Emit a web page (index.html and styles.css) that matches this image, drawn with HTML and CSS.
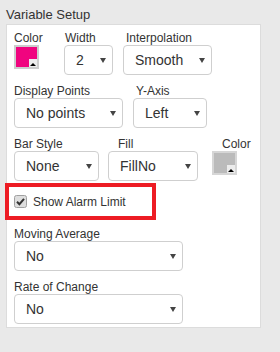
FILE: index.html
```html
<!DOCTYPE html>
<html>
<head>
<meta charset="utf-8">
<link rel="stylesheet" href="styles.css">
</head>
<body>
<div class="title">Variable Setup</div>
<div class="panel">
  <div class="row">
    <div class="field f-color">
      <div class="lbl">Color</div>
      <div class="swatch pink"><span class="corner"><span class="tri"></span></span></div>
    </div>
    <div class="field f-width">
      <div class="lbl pl1">Width</div>
      <div class="sel s-width">2<i class="arrow"></i></div>
    </div>
    <div class="field">
      <div class="lbl pl3">Interpolation</div>
      <div class="sel s-interp">Smooth<i class="arrow"></i></div>
    </div>
  </div>
  <div class="row">
    <div class="field f-disp">
      <div class="lbl">Display Points</div>
      <div class="sel s-disp">No points<i class="arrow"></i></div>
    </div>
    <div class="field">
      <div class="lbl pl3">Y-Axis</div>
      <div class="sel s-yaxis">Left<i class="arrow"></i></div>
    </div>
  </div>
  <div class="row">
    <div class="field f-bar">
      <div class="lbl">Bar Style</div>
      <div class="sel s-bar">None<i class="arrow"></i></div>
    </div>
    <div class="field f-fill">
      <div class="lbl pl10">Fill</div>
      <div class="sel s-fill">FillNo<i class="arrow"></i></div>
    </div>
    <div class="field">
      <div class="lbl pl10">Color</div>
      <div class="swatch grey"><span class="corner"><span class="tri"></span></span></div>
    </div>
  </div>
  <div class="alarm">
    <svg class="check" width="13" height="13" viewBox="0 0 13 13">
      <rect x="0.5" y="0.5" width="12" height="12" rx="2" fill="#dedede" stroke="#a0a0a0"/>
      <path d="M3 6.8 L5.4 9.2 L10 3.8" fill="none" stroke="#333" stroke-width="2"/>
    </svg>
    <span class="alarm-text">Show Alarm Limit</span>
  </div>
  <div class="field block">
    <div class="lbl">Moving Average</div>
    <div class="sel s-wide">No<i class="arrow"></i></div>
  </div>
  <div class="field block">
    <div class="lbl">Rate of Change</div>
    <div class="sel s-wide">No<i class="arrow"></i></div>
  </div>
</div>
</body>
</html>
```

FILE: styles.css
```css
html, body {
  margin: 0;
  padding: 0;
}
body {
  background: #e9e9e9;
  font-family: "Liberation Sans", Arial, sans-serif;
  color: #333;
  width: 280px;
  height: 352px;
  overflow: hidden;
}
.title {
  font-size: 13px;
  line-height: 16px;
  padding: 7px 0 0 6px;
  height: 16px;
}
.panel {
  margin: 1px 0 0 6px;
  width: 255px;
  height: 304px;
  box-sizing: border-box;
  background: #fff;
  border: 1px solid #dcdcdc;
  padding: 6px 7px 3px 7px;
  display: flex;
  flex-direction: column;
}
.row {
  display: flex;
  margin-bottom: 9px;
}
.row:nth-child(3) {
  margin-bottom: 0;
}
.field {
  display: flex;
  flex-direction: column;
  align-items: flex-start;
}
.lbl {
  font-size: 12px;
  line-height: 14px;
  height: 14px;
  white-space: nowrap;
}
.pl1 { padding-left: 1px; }
.pl3 { padding-left: 3px; }
.pl10 { padding-left: 10px; }
.f-color { width: 50px; }
.f-width { width: 59px; }
.f-disp { width: 119px; }
.f-bar { width: 94px; }
.f-fill { width: 104px; }
.sel {
  height: 30px;
  box-sizing: border-box;
  border: 1px solid #cfcfcf;
  border-radius: 4px;
  display: flex;
  align-items: center;
  justify-content: space-between;
  padding: 0 6px 0 11px;
  font-size: 14px;
  color: #333;
  background: #fff;
  white-space: nowrap;
}
.arrow {
  display: block;
  width: 0;
  height: 0;
  border-left: 3px solid transparent;
  border-right: 3px solid transparent;
  border-top: 5px solid #444;
  margin-top: 1px;
}
.s-width { width: 49px; }
.s-interp { width: 89px; }
.s-disp { width: 109px; }
.s-yaxis { width: 74px; }
.s-bar { width: 85px; }
.s-fill { width: 90px; }
.s-wide { width: 169px; }
.swatch {
  width: 25px;
  height: 24px;
  box-sizing: border-box;
  border: 2px solid #cdcdcd;
  display: flex;
  justify-content: flex-end;
  align-items: flex-end;
}
.swatch.pink { background: #f0047f; }
.swatch.grey { background: #bbbbbb; border-color: #d6d6d6; }
.corner {
  width: 8px;
  height: 8px;
  background: #ececec;
  display: flex;
  justify-content: center;
  align-items: flex-end;
  padding-bottom: 1px;
  box-sizing: border-box;
}
.tri {
  display: block;
  width: 0;
  height: 0;
  border-left: 3px solid transparent;
  border-right: 3px solid transparent;
  border-bottom: 3px solid #000;
}
.alarm {
  margin: 2px 0 0 -9px;
  width: 151px;
  height: 37px;
  box-sizing: border-box;
  border: 4px solid #ed1c24;
  display: flex;
  align-items: center;
  padding-left: 5px;
}
.check {
  display: block;
  margin-right: 6px;
}
.alarm-text {
  font-size: 12px;
  line-height: 14px;
}
.block {
  margin-top: 7px;
}
.block + .block {
  margin-top: 9px;
}
```
